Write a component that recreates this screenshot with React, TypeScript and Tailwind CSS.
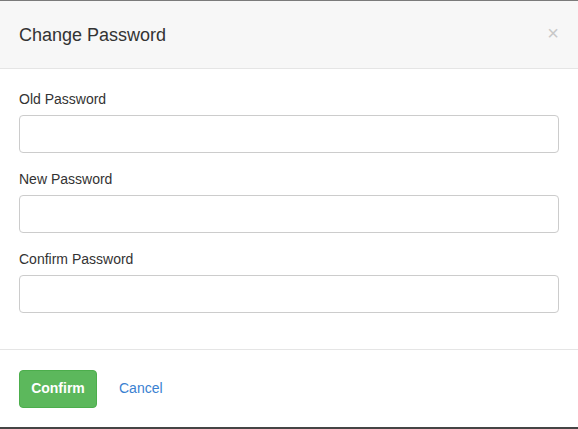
export default function App() {
  const fields = ["Old Password", "New Password", "Confirm Password"];
  return (
    <div
      className="flex h-[429px] w-[578px] flex-col border-t border-b-2 border-t-[#7b7b7b] border-b-[#454545] bg-white text-[#333]"
      style={{ fontFamily: '"Liberation Sans", Arial, sans-serif' }}
    >
      <div className="flex h-[68px] shrink-0 items-center justify-between border-b border-[#e5e5e5] bg-[#f7f7f7] pl-[19px] pr-[19px]">
        <h1 className="text-[18px] leading-none text-[#333]">Change Password</h1>
        <button type="button" className="mb-[4px] text-[20px] leading-none text-[#c8c8c8]">
          ×
        </button>
      </div>

      <div className="flex flex-col px-[19px] pt-[20px] pb-[36px]">
        {fields.map((label, i) => (
          <div key={label} className={i > 0 ? "mt-[16px]" : ""}>
            <label className="block text-[14px] leading-[20px] text-[#333]">{label}</label>
            <input
              type="password"
              className="mt-[6px] block h-[38px] w-full rounded-[4px] border border-[#ccc] bg-white px-3 text-[14px] outline-none"
            />
          </div>
        ))}
      </div>

      <div className="flex flex-1 items-center gap-[22px] border-t border-[#e5e5e5] px-[19px]">
        <button
          type="button"
          className="h-[38px] w-[78px] rounded-[4px] border border-[#4cae4c] bg-[#5cb85c] text-[14px] font-bold text-white"
        >
          Confirm
        </button>
        <button type="button" className="text-[14px] text-[#3a81d1]">
          Cancel
        </button>
      </div>
    </div>
  );
}
